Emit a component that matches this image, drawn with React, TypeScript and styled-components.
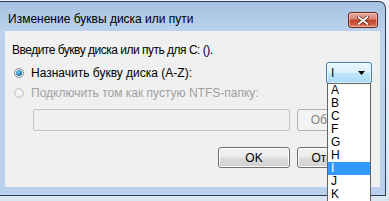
import React from 'react';
import styled, { createGlobalStyle } from 'styled-components';

const Global = createGlobalStyle`
  html, body { margin: 0; padding: 0; }
  body {
    width: 389px; height: 201px; overflow: hidden;
    background: #e4ecf6;
    font-family: "Liberation Sans", Arial, sans-serif;
  }
`;

const Page = styled.div`
  position: relative;
  width: 389px;
  height: 201px;
  overflow: hidden;
  box-sizing: border-box;
  padding-top: 1px;
  background: linear-gradient(#eef2f8, #dbe6f3);
`;

const Window = styled.div`
  width: 386px;
  height: 195px;
  box-sizing: border-box;
  border: 1px solid #2f3e52;
  border-left: none;
  border-radius: 0 7px 0 0;
  background: linear-gradient(#a6c1e1 0px, #bcd3ee 30px, #b8d0ec 100%);
  display: flex;
  flex-direction: column;
  padding: 0 5px 8px 5px;
`;

const TitleBar = styled.div`
  height: 29px;
  flex: none;
  display: flex;
  align-items: flex-start;
  justify-content: space-between;
`;

const TitleText = styled.div`
  font-size: 12px;
  line-height: 16px;
  margin-top: 9px;
  padding-left: 3px;
  color: #000;
`;

const CloseButton = styled.div`
  width: 30px;
  height: 16px;
  margin-top: 10px;
  margin-right: 2px;
  box-sizing: border-box;
  border: 1px solid #6a2a22;
  border-radius: 3px;
  background: linear-gradient(#e8a899 0%, #d98a7b 40%, #c4462f 52%, #cf5a43 80%, #de8a70 100%);
  box-shadow: inset 0 0 0 1px rgba(255, 220, 210, 0.5);
  display: flex;
  align-items: center;
  justify-content: center;
`;

const Client = styled.div`
  flex: 1;
  background: #f0f0f0;
  display: flex;
  flex-direction: column;
  padding: 0 8px 0 7px;
  font-size: 12px;
  color: #000;
`;

const Prompt = styled.div`
  margin-top: 11px;
  line-height: 16px;
  height: 16px;
  letter-spacing: -0.5px;
  white-space: nowrap;
`;

const OptionRow = styled.div<{ $h: number; $mt: number }>`
  height: ${(p) => p.$h}px;
  margin-top: ${(p) => p.$mt}px;
  display: flex;
  align-items: center;
  justify-content: space-between;
`;

const RadioLabel = styled.label<{ $disabled?: boolean }>`
  display: flex;
  align-items: center;
  gap: 7px;
  padding-left: 2px;
  color: ${(p) => (p.$disabled ? '#a0a0a0' : '#000')};
  line-height: 16px;
  white-space: nowrap;
`;

const RadioCircle = styled.span<{ $checked?: boolean; $disabled?: boolean }>`
  width: 10px;
  height: 10px;
  flex: none;
  box-sizing: border-box;
  border-radius: 50%;
  border: 1px solid ${(p) => (p.$disabled ? '#c4c4c4' : '#8a8c8e')};
  background: ${(p) =>
    p.$disabled
      ? 'radial-gradient(circle, #f7f7f7 0%, #eaeaea 100%)'
      : 'radial-gradient(circle, #ffffff 0%, #e4e4e4 100%)'};
  display: flex;
  align-items: center;
  justify-content: center;
  &::after {
    content: '';
    display: ${(p) => (p.$checked ? 'block' : 'none')};
    width: 6px;
    height: 6px;
    border-radius: 50%;
    background: radial-gradient(circle at 40% 35%, #7fd4f7 0%, #2b7fb8 55%, #144c7a 100%);
  }
`;

const Combo = styled.div`
  width: 46px;
  height: 22px;
  box-sizing: border-box;
  border: 1px solid #3c7fb1;
  border-radius: 3px;
  background: linear-gradient(#eaf6fd 0%, #d9f0fc 48%, #bee6fd 52%, #a7d9f5 100%);
  box-shadow: inset 0 0 0 1px rgba(255, 255, 255, 0.6);
  display: flex;
  align-items: center;
  justify-content: space-between;
  padding: 0 6px 0 4px;
`;

const ComboValue = styled.span`
  font-size: 12px;
  line-height: 14px;
`;

const PathRow = styled.div`
  margin-top: 8px;
  height: 22px;
  display: flex;
  gap: 7px;
  padding-left: 21px;
`;

const TextBox = styled.div`
  width: 257px;
  height: 22px;
  box-sizing: border-box;
  border: 1px solid #c3c3c3;
  border-radius: 2px;
  background: #f0f0f0;
`;

const Button = styled.div<{ $disabled?: boolean; $h?: number }>`
  width: 72px;
  height: ${(p) => p.$h ?? 21}px;
  box-sizing: border-box;
  border: 1px solid ${(p) => (p.$disabled ? '#adb2b5' : '#707070')};
  border-radius: 3px;
  background: ${(p) =>
    p.$disabled
      ? '#f4f4f4'
      : 'linear-gradient(#f2f2f2 0%, #ebebeb 48%, #dddddd 52%, #cfcfcf 100%)'};
  box-shadow: inset 0 0 0 1px ${(p) => (p.$disabled ? '#f4f4f4' : '#fcfcfc')};
  display: flex;
  align-items: center;
  justify-content: center;
  color: ${(p) => (p.$disabled ? '#838383' : '#000')};
  font-size: 12px;
  white-space: nowrap;
`;

const ButtonRow = styled.div`
  margin-top: 16px;
  display: flex;
  justify-content: flex-end;
  gap: 7px;
  padding-right: 3px;
`;

const DropList = styled.ul`
  position: absolute;
  left: 327px;
  top: 83px;
  width: 44px;
  margin: 0;
  padding: 0;
  list-style: none;
  box-sizing: border-box;
  border: 1px solid #646464;
  background: #fff;
  font-size: 12px;
`;

const DropItem = styled.li<{ $selected?: boolean }>`
  height: 13px;
  line-height: 13px;
  padding-left: 3px;
  background: ${(p) => (p.$selected ? '#3399ff' : 'transparent')};
  color: ${(p) => (p.$selected ? '#fff' : '#000')};
`;

const letters = ['A', 'B', 'C', 'F', 'G', 'H', 'I', 'J', 'K'];

export default function App() {
  return (
    <>
      <Global />
      <Page>
        <Window>
          <TitleBar>
            <TitleText>Изменение буквы диска или пути</TitleText>
            <CloseButton>
              <svg width="12" height="9" viewBox="0 0 12 9">
                <path d="M1.5 1 L10.5 8 M10.5 1 L1.5 8" stroke="#5a1d16" strokeWidth="3.2" strokeLinecap="round" />
                <path d="M1.5 1 L10.5 8 M10.5 1 L1.5 8" stroke="#ffffff" strokeWidth="1.8" strokeLinecap="round" />
              </svg>
            </CloseButton>
          </TitleBar>
          <Client>
            <Prompt>Введите букву диска или путь для C: ().</Prompt>
            <OptionRow $h={22} $mt={4}>
              <RadioLabel>
                <RadioCircle $checked />
                Назначить букву диска (A-Z):
              </RadioLabel>
              <Combo>
                <ComboValue>I</ComboValue>
                <svg width="7" height="4" viewBox="0 0 7 4">
                  <path d="M0 0 H7 L3.5 4 Z" fill="#000" />
                </svg>
              </Combo>
            </OptionRow>
            <OptionRow $h={16} $mt={1}>
              <RadioLabel $disabled>
                <RadioCircle $disabled />
                Подключить том как пустую NTFS-папку:
              </RadioLabel>
            </OptionRow>
            <PathRow>
              <TextBox />
              <Button $disabled $h={22}>Обзор...</Button>
            </PathRow>
            <ButtonRow>
              <Button>OK</Button>
              <Button>Отмена</Button>
            </ButtonRow>
          </Client>
        </Window>
        <DropList>
          {letters.map((l) => (
            <DropItem key={l} $selected={l === 'I'}>
              {l}
            </DropItem>
          ))}
        </DropList>
      </Page>
    </>
  );
}
